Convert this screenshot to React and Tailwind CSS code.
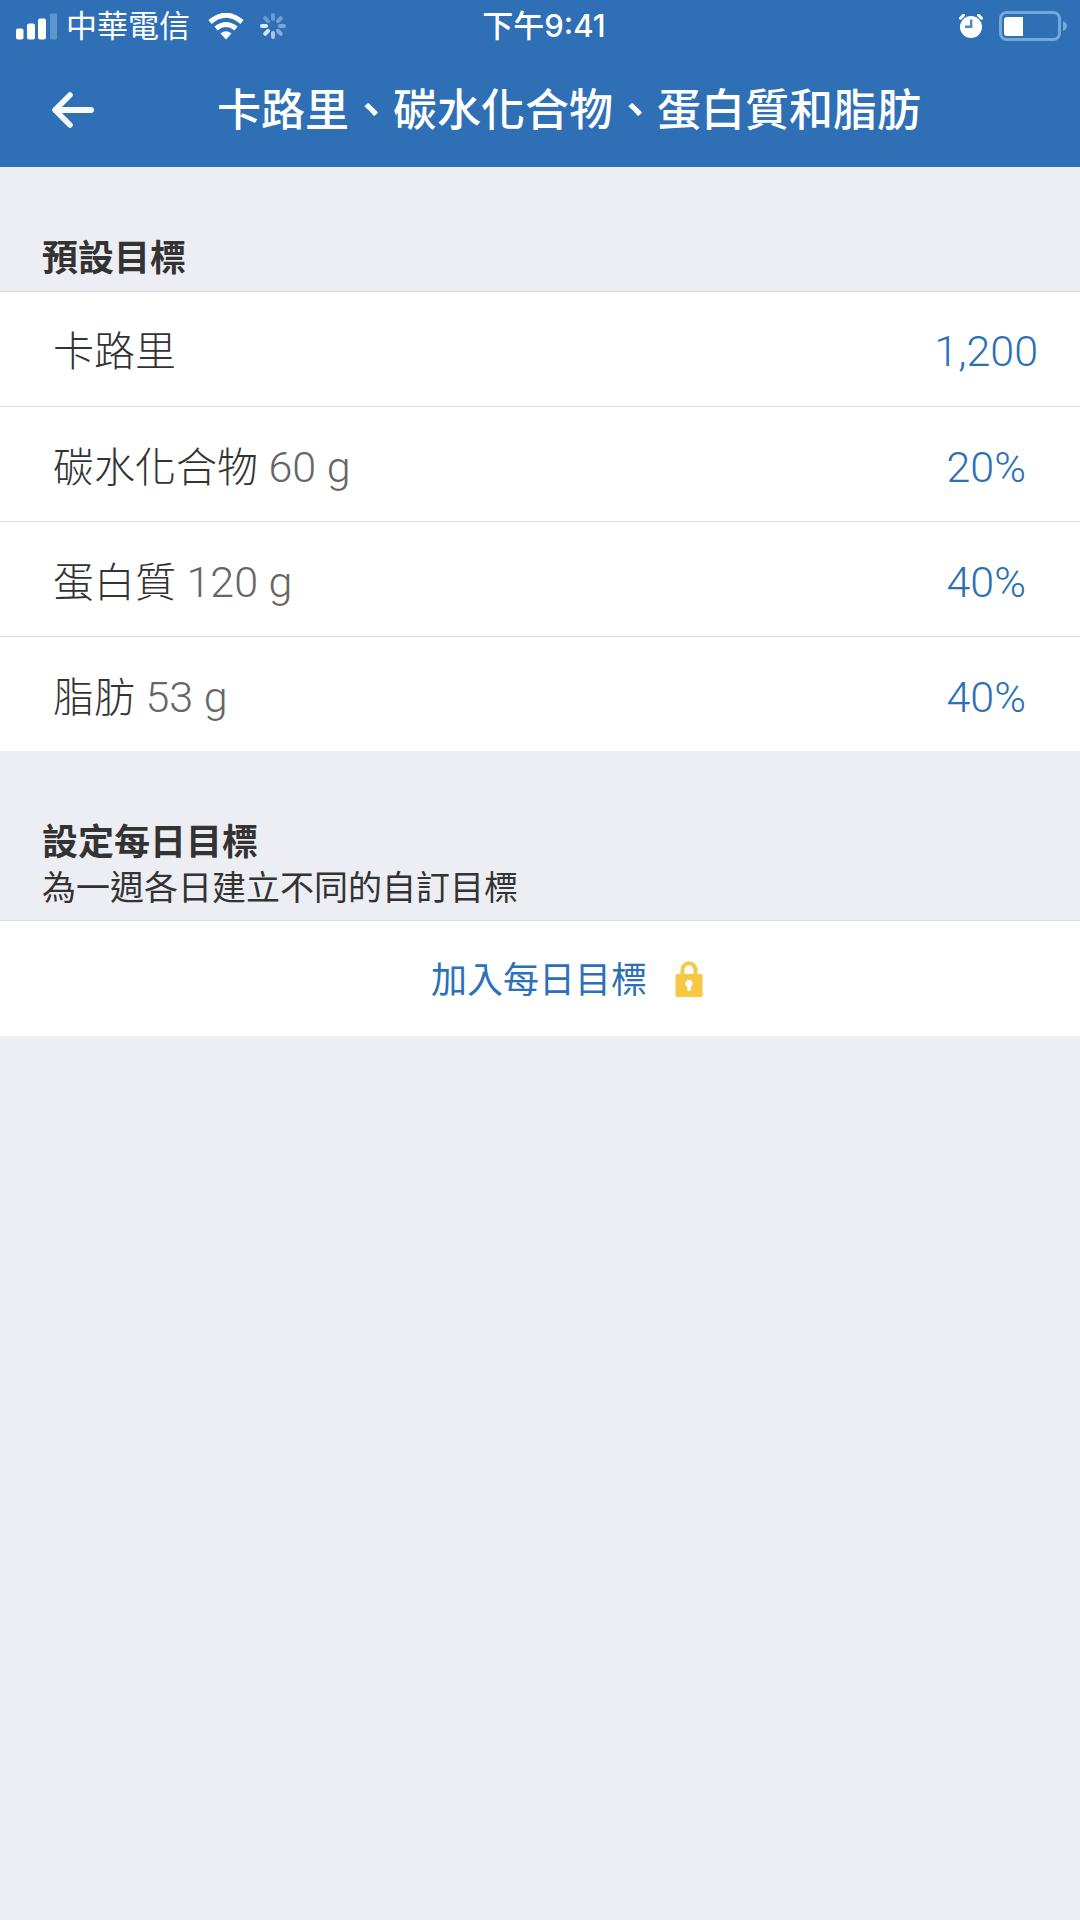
const goals = [
  { id: 'calories', name: '卡路里', value: '1,200' },
  { id: 'carbs', name: '碳水化合物', grams: '60 g', value: '20%' },
  { id: 'protein', name: '蛋白質', grams: '120 g', value: '40%' },
  { id: 'fat', name: '脂肪', grams: '53 g', value: '40%' },
]

// Spokes of the activity spinner, clockwise from the top
const spokes = [0.35, 0.4, 0.45, 0.5, 0.7, 0.95, 1, 0.35]

function Signal() {
  return (
    <svg className="w-[42px] h-[27px]" viewBox="0 0 42 27" fill="#fff" aria-hidden="true">
      <rect x="0" y="15.5" width="7.5" height="11" rx="2" />
      <rect x="11" y="10.5" width="8" height="16" rx="2" />
      <rect x="22" y="5.5" width="8" height="21" rx="2" />
      <rect x="34" y="0.5" width="7" height="26" rx="1" fill="#5c97cc" />
    </svg>
  )
}

function Wifi() {
  return (
    <svg className="w-9 h-[27px]" viewBox="0 0 36 27" fill="none" stroke="#fff" aria-hidden="true">
      <path d="M2 9 Q18 -4.5 34 9" strokeWidth="5" />
      <path d="M8 15.5 Q18 7.5 28 15.5" strokeWidth="5" />
      <path d="M12.5 20.5 Q18 16 23.5 20.5 L18 26.5 Z" fill="#fff" stroke="none" />
    </svg>
  )
}

function Spinner() {
  return (
    <svg className="w-[26px] h-[26px]" viewBox="-13 -13 26 26" aria-hidden="true">
      {spokes.map((o, i) => (
        <path
          key={i}
          d="M0 -7V-11"
          stroke="#dcecf8"
          strokeWidth="4"
          strokeLinecap="round"
          opacity={o}
          transform={`rotate(${i * 45})`}
        />
      ))}
    </svg>
  )
}

function Alarm() {
  return (
    <svg className="w-6 h-6" viewBox="0 0 24 24" aria-hidden="true">
      <circle cx="12" cy="13" r="11" fill="#fff" />
      <path d="M1.5 4.2 L4.5 1.2 M22.5 4.2 L19.5 1.2" stroke="#fff" strokeWidth="3" strokeLinecap="round" />
      <path d="M12.2 5.5 V12.8 H6" fill="none" stroke="#4f8ac6" strokeWidth="2.4" />
    </svg>
  )
}

function Battery() {
  return (
    <svg className="w-[73px] h-[30px]" viewBox="0 0 73 30" aria-hidden="true">
      <rect x="1.5" y="1.5" width="59" height="27" rx="6" fill="none" stroke="#74a8d6" strokeWidth="3" />
      <path d="M64 10 Q68 11.5 68 15 Q68 18.5 64 20 Z" fill="#74a8d6" />
      <path d="M24 6 V25 H8 Q5 25 5 22 V9 Q5 6 8 6 Z" fill="#fff" />
    </svg>
  )
}

function Lock() {
  return (
    <svg className="w-7 h-9" viewBox="0 0 28 36" aria-hidden="true">
      <path d="M7.5 15 V9 A6.5 6.8 0 0 1 20.5 9 V15" fill="none" stroke="#f6c844" strokeWidth="4" />
      <rect x="0.5" y="13" width="27" height="23" rx="1.5" fill="#f6c844" />
      <circle cx="14" cy="22.5" r="3.6" fill="#fff" />
      <rect x="12.3" y="24" width="3.4" height="6" rx="1" fill="#fff" />
    </svg>
  )
}

function StatusBar() {
  return (
    <div className="grid grid-cols-[1fr_auto_1fr] items-center h-[52px] pl-4 pr-2 text-[31px] leading-[50px]">
      <div className="flex items-center">
        <Signal />
        <span className="ml-2">中華電信</span>
        <span className="ml-[18px]"><Wifi /></span>
        <span className="ml-4"><Spinner /></span>
      </div>
      <span className="font-medium">下午9:41</span>
      <div className="flex items-center justify-end gap-4">
        <Alarm />
        <Battery />
      </div>
    </div>
  )
}

function GoalRow({ goal }) {
  return (
    <li className="border-b border-[#dcdce0] last:border-b-0">
      <button
        className={`flex w-full items-center justify-between h-[114px] pl-[53px] text-[43px] font-light text-left ${
          goal.grams ? 'pt-1.5 pr-[54px]' : 'pt-1 pr-[42px]'
        }`}
      >
        <span className="text-[#666]">
          <span className="text-[41px] text-[#333]">{goal.name}</span>
          {goal.grams && ` ${goal.grams}`}
        </span>
        <span className="text-[#2c70b7]">{goal.value}</span>
      </button>
    </li>
  )
}

export default function App() {
  return (
    <div className="min-h-screen bg-[#edeef3] text-[#333] font-['Roboto','Noto_Sans_CJK_TC',sans-serif]">
      <header className="bg-[#2e6fb6] text-white font-['Inter','Noto_Sans_CJK_TC',sans-serif]">
        <StatusBar />
        <div className="flex items-center h-[115px] px-10">
          <button className="pl-3 pr-1" aria-label="返回">
            <svg className="w-[42px] h-9" viewBox="0 0 42 36" fill="none" stroke="#f7f8fa" strokeLinecap="round" strokeLinejoin="round">
              <path d="M18 3 L3 18 L18 33" strokeWidth="5.5" />
              <path d="M4 18 H39" strokeWidth="6" />
            </svg>
          </button>
          <h1 className="flex-1 text-center text-[44px] font-medium">卡路里、碳水化合物、蛋白質和脂肪</h1>
        </div>
      </header>

      <section>
        <h2 className="px-[42px] pt-[70px] pb-[9px] text-[36px] leading-[45px] font-bold border-b border-[#dcdce0]">
          預設目標
        </h2>
        <ul className="bg-white">
          {goals.map(g => <GoalRow key={g.id} goal={g} />)}
        </ul>
      </section>

      <section>
        <div className="px-[42px] pt-[70px] pb-[9px] border-b border-[#dcdce0]">
          <h2 className="text-[36px] leading-[45px] font-bold">設定每日目標</h2>
          <p className="text-[34px] leading-[45px]">為一週各日建立不同的自訂目標</p>
        </div>
        <button className="flex w-full items-center justify-center gap-7 h-[115px] pl-[54px] bg-white text-[36px] text-[#2c70b7]">
          <span className="pt-1">加入每日目標</span>
          <Lock />
        </button>
      </section>
    </div>
  )
}
